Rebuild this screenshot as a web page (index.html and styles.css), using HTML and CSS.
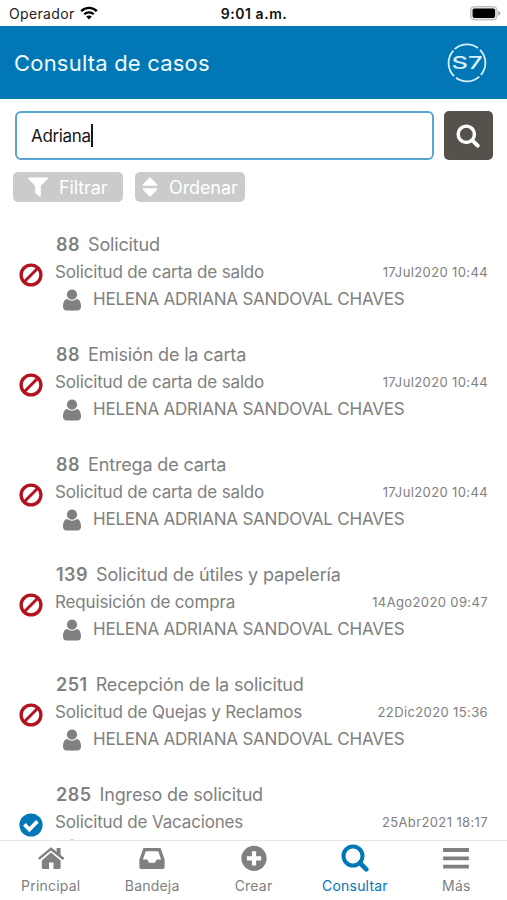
FILE: index.html
```
<!DOCTYPE html>
<html lang="es">
<head>
    <meta charset="UTF-8">
    <meta name="viewport" content="width=device-width, initial-scale=1.0">
    <title>Consulta de casos</title>
    <link rel="stylesheet" href="styles.css">
</head>
<body>
    <svg class="sprite">
        <symbol id="ban" viewBox="0 0 24 24">
            <circle cx="12" cy="12" r="9.9" fill="none" stroke="currentColor" stroke-width="3.3"/>
            <path d="M5.3 18.7L18.7 5.3" stroke="currentColor" stroke-width="3"/>
        </symbol>
        <symbol id="check" viewBox="0 0 24 24">
            <circle cx="12" cy="12" r="11.6" fill="currentColor"/>
            <path d="M5.4 11.4L10.4 16.6L18.4 8.4" fill="none" stroke="#fff" stroke-width="3.7"/>
        </symbol>
        <symbol id="user" viewBox="0 0 18 22">
            <circle cx="9" cy="5.6" r="5.1" fill="currentColor"/>
            <path d="M4.3 10C1.2 10.3 0 13.6 0 17.5C0 20 1.4 21.5 3.6 21.5H14.4C16.6 21.5 18 20 18 17.5C18 13.6 16.8 10.3 13.7 10C11 12.2 7 12.2 4.3 10Z" fill="currentColor"/>
        </symbol>
        <symbol id="search" viewBox="0 0 28 28">
            <circle cx="12" cy="12" r="9.5" fill="none" stroke="currentColor" stroke-width="4"/>
            <path d="M19 19L25.3 25.3" stroke="currentColor" stroke-width="4.6" stroke-linecap="round"/>
        </symbol>
    </svg>

    <div class="status">
        <span class="carrier">Operador
            <svg class="wifi" viewBox="0 0 18 14">
                <path d="M1.2 5.2C5.5 .8 12.5 .8 16.8 5.2" fill="none" stroke="#000" stroke-width="2.4"/>
                <path d="M4.2 8.3C6.9 5.6 11.1 5.6 13.8 8.3" fill="none" stroke="#000" stroke-width="2.2"/>
                <path d="M9 13.4L6.2 10.6C7.8 9.2 10.2 9.2 11.8 10.6Z"/>
            </svg>
        </span>
        <span class="time">9:01 a.m.</span>
        <svg class="battery" viewBox="0 0 31 15">
            <rect x=".6" y=".6" width="26.5" height="13.3" rx="3.6" fill="#e4e4e4" stroke="#b5b5b5"/>
            <rect x="2.6" y="2.5" width="22.5" height="9.6" rx="2"/>
            <path d="M28.3 4.8C31 6 31 8.7 28.3 9.8Z" fill="#a5a5a5"/>
        </svg>
    </div>

    <div class="header">
        <h1>Consulta de casos</h1>
        <svg class="logo" viewBox="0 0 40 40">
            <path d="M7.6 6.2A18.3 18.3 0 0 1 31 5M33 6.8A18.3 18.3 0 0 1 33.8 31.9M32.3 33.6A18.3 18.3 0 0 1 9 34.8M7 33A18.3 18.3 0 0 1 6.4 7.6" fill="none" stroke="#d9f0fc" stroke-width="1.8"/>
            <text x="4.6" y="25.6" textLength="31" lengthAdjust="spacingAndGlyphs">S7</text>
        </svg>
    </div>

    <div class="search">
        <div class="field">Adriana<span class="cursor"></span></div>
        <button class="search-btn"><svg><use href="#search"/></svg></button>
    </div>

    <div class="tools">
        <button class="filter">
            <svg viewBox="0 0 20 20"><path d="M1 .5H19C20 .5 20.2 1.4 19.6 2L12.8 9V19C12.8 19.8 12 20 11.5 19.5L7.8 16.4C7.4 16 7.2 15.6 7.2 15.1V9L.4 2C-.2 1.4 0 .5 1 .5Z" fill="#fff"/></svg>
            Filtrar
        </button>
        <button class="sort">
            <svg viewBox="0 0 16 20"><path d="M8 0L15 7.2C15.8 8.1 15.4 8.7 14.6 8.7H1.4C.6 8.7 .2 8.1 1 7.2ZM8 20L15 12.8C15.8 11.9 15.4 11.3 14.6 11.3H1.4C.6 11.3 .2 11.9 1 12.8Z" fill="#fff"/></svg>
            Ordenar
        </button>
    </div>

    <div class="list">
        <div class="case">
            <svg class="state"><use href="#ban"/></svg>
            <div class="info">
                <p class="title"><b>88</b>Solicitud</p>
                <p class="process">Solicitud de carta de saldo <span class="date">17Jul2020 10:44</span></p>
                <p class="person"><svg><use href="#user"/></svg>HELENA ADRIANA SANDOVAL CHAVES</p>
            </div>
        </div>
        <div class="case">
            <svg class="state"><use href="#ban"/></svg>
            <div class="info">
                <p class="title"><b>88</b>Emisión de la carta</p>
                <p class="process">Solicitud de carta de saldo <span class="date">17Jul2020 10:44</span></p>
                <p class="person"><svg><use href="#user"/></svg>HELENA ADRIANA SANDOVAL CHAVES</p>
            </div>
        </div>
        <div class="case">
            <svg class="state"><use href="#ban"/></svg>
            <div class="info">
                <p class="title"><b>88</b>Entrega de carta</p>
                <p class="process">Solicitud de carta de saldo <span class="date">17Jul2020 10:44</span></p>
                <p class="person"><svg><use href="#user"/></svg>HELENA ADRIANA SANDOVAL CHAVES</p>
            </div>
        </div>
        <div class="case">
            <svg class="state"><use href="#ban"/></svg>
            <div class="info">
                <p class="title"><b>139</b>Solicitud de útiles y papelería</p>
                <p class="process">Requisición de compra <span class="date">14Ago2020 09:47</span></p>
                <p class="person"><svg><use href="#user"/></svg>HELENA ADRIANA SANDOVAL CHAVES</p>
            </div>
        </div>
        <div class="case">
            <svg class="state"><use href="#ban"/></svg>
            <div class="info">
                <p class="title"><b>251</b>Recepción de la solicitud</p>
                <p class="process">Solicitud de Quejas y Reclamos <span class="date">22Dic2020 15:36</span></p>
                <p class="person"><svg><use href="#user"/></svg>HELENA ADRIANA SANDOVAL CHAVES</p>
            </div>
        </div>
        <div class="case">
            <svg class="state done"><use href="#check"/></svg>
            <div class="info">
                <p class="title"><b>285</b>Ingreso de solicitud</p>
                <p class="process">Solicitud de Vacaciones <span class="date">25Abr2021 18:17</span></p>
                <p class="person"><svg><use href="#user"/></svg></p>
            </div>
        </div>
    </div>

    <div class="tabs">
        <div class="tab">
            <svg viewBox="0 0 28 28"><path d="M14 8.6L23.6 16.4V23.8C23.6 24.5 23.2 24.9 22.5 24.9H16.5V18.4H12V24.9H6C5.3 24.9 4.8 24.5 4.8 23.8V16.4Z" fill="currentColor"/><path d="M1.8 14.9L14 4.9L26.6 14.9" fill="none" stroke="currentColor" stroke-width="2.5"/><path d="M19.6 4H23.6V12L19.6 9Z" fill="currentColor"/></svg>
            Principal
        </div>
        <div class="tab">
            <svg viewBox="0 0 28 28"><path fill-rule="evenodd" d="M6.5 4H21.5C22.3 4 22.8 4.4 23 5.1L26.6 15.5V23.3C26.6 24.3 26 24.9 25 24.9H3C2 24.9 1.4 24.3 1.4 23.3V15.5L5 5.1C5.2 4.4 5.7 4 6.5 4ZM7.7 7.2L4.9 15.5H9.4L11 18.7H17L18.6 15.5H23.1L20.3 7.2Z" fill="currentColor"/></svg>
            Bandeja
        </div>
        <div class="tab">
            <svg viewBox="0 0 28 28"><circle cx="14" cy="14.3" r="12.6" fill="currentColor"/><path d="M14 7.2V21.4M6.9 14.3H21.1" stroke="#fff" stroke-width="4.2"/></svg>
            Crear
        </div>
        <div class="tab active">
            <svg><use href="#search"/></svg>
            Consultar
        </div>
        <div class="tab">
            <svg viewBox="0 0 28 28"><path d="M3 6H25M3 14.3H25M3 22.6H25" stroke="currentColor" stroke-width="3.8" stroke-linecap="square"/></svg>
            Más
        </div>
    </div>
</body>
</html>
```

FILE: styles.css
```
* {
    box-sizing: border-box;
}
body {
    margin: 0;
    height: 900px;
    display: flex;
    flex-direction: column;
    overflow: hidden;
    background-color: #fff;
    font-family: Inter, "Liberation Sans", sans-serif;
    color: #808080;
}
h1, p {
    margin: 0;
    font-weight: normal;
}
button {
    border: none;
    padding: 0;
    font-family: inherit;
    color: #fff;
}
.sprite {
    display: none;
}

/* status bar */
.status {
    height: 26px;
    flex: none;
    display: grid;
    grid-template-columns: 1fr auto 1fr;
    align-items: center;
    padding: 1px 6px 0 9px;
    font-size: 14px;
    color: #222;
}
.carrier {
    display: flex;
    align-items: center;
    gap: 5px;
    letter-spacing: 0.35px;
}
.wifi {
    width: 18px;
    height: 14px;
    margin-top: -2px;
}
.time {
    font-weight: 600;
    letter-spacing: 0.55px;
    margin-left: -2px;
    color: #111;
}
.battery {
    width: 31px;
    height: 15px;
    justify-self: end;
}

/* header */
.header {
    height: 73px;
    flex: none;
    display: flex;
    align-items: center;
    justify-content: space-between;
    padding: 0 20px 0 14px;
    background-color: #0277b5;
}
.header h1 {
    font-size: 22px;
    letter-spacing: 0.2px;
    color: #f0fbff;
}
.logo {
    width: 40px;
    height: 40px;
}
.logo text {
    font-size: 17px;
    font-weight: 500;
    fill: #d9f0fc;
}

/* search */
.search {
    flex: none;
    display: flex;
    gap: 10px;
    padding: 12px 14px 0 15px;
}
.field {
    flex: 1;
    height: 49px;
    display: flex;
    align-items: center;
    padding-left: 14px;
    border: 2px solid #5aa5d0;
    border-radius: 6px;
    font-size: 17px;
    letter-spacing: -0.35px;
    color: #161616;
}
.cursor {
    width: 2px;
    height: 23px;
    background-color: #15152b;
}
.search-btn {
    width: 49px;
    height: 49px;
    display: flex;
    align-items: center;
    justify-content: center;
    border-radius: 5px;
    background-color: #55524b;
}
.search-btn svg {
    width: 24px;
    height: 24px;
    margin-right: 2px;
}
.tools {
    flex: none;
    display: flex;
    gap: 12px;
    padding: 12px 13px 0;
}
.tools button {
    width: 110px;
    height: 30px;
    display: flex;
    align-items: center;
    border-radius: 5px;
    background-color: #cbcbcb;
    font-size: 18px;
    letter-spacing: -0.1px;
}
.filter {
    gap: 11px;
    padding-left: 15px;
}
.filter svg {
    width: 20px;
    height: 20px;
}
.sort {
    gap: 11px;
    padding-left: 7px;
}
.sort svg {
    width: 16px;
    height: 20px;
}

/* cases */
.list {
    flex: 1;
    min-height: 0;
    overflow: hidden;
    padding: 29px 19px 0;
}
.case {
    height: 110px;
    display: flex;
    gap: 12px;
}
.state {
    width: 24px;
    height: 24px;
    flex: none;
    margin-top: 32px;
    color: #b5121f;
}
.done {
    color: #0277b5;
}
.info {
    flex: 1;
}
.info p {
    height: 27px;
    display: flex;
    align-items: center;
    white-space: nowrap;
}
.info .title {
    padding-left: 1px;
    font-size: 18px;
    letter-spacing: -0.16px;
}
.title b {
    font-weight: 600;
    letter-spacing: 0.5px;
    margin-right: 8px;
}
.process {
    font-size: 17px;
    letter-spacing: -0.16px;
}
.date {
    margin-left: auto;
    font-size: 13px;
    letter-spacing: 0.38px;
}
.person {
    padding-left: 8px;
    font-size: 17px;
    letter-spacing: -0.21px;
}
.person svg {
    width: 18px;
    height: 22px;
    margin: 3px 12px 0 0;
}

/* bottom tabs */
.tabs {
    height: 60px;
    flex: none;
    display: flex;
    border-top: 1px solid #e6e6e6;
}
.tab {
    flex: 1;
    display: flex;
    flex-direction: column;
    align-items: center;
    padding-top: 3px;
    gap: 5px;
    font-size: 14px;
    line-height: 17px;
    letter-spacing: 0.2px;
}
.tab svg {
    width: 28px;
    height: 28px;
}
.active {
    color: #0277b5;
}
```
